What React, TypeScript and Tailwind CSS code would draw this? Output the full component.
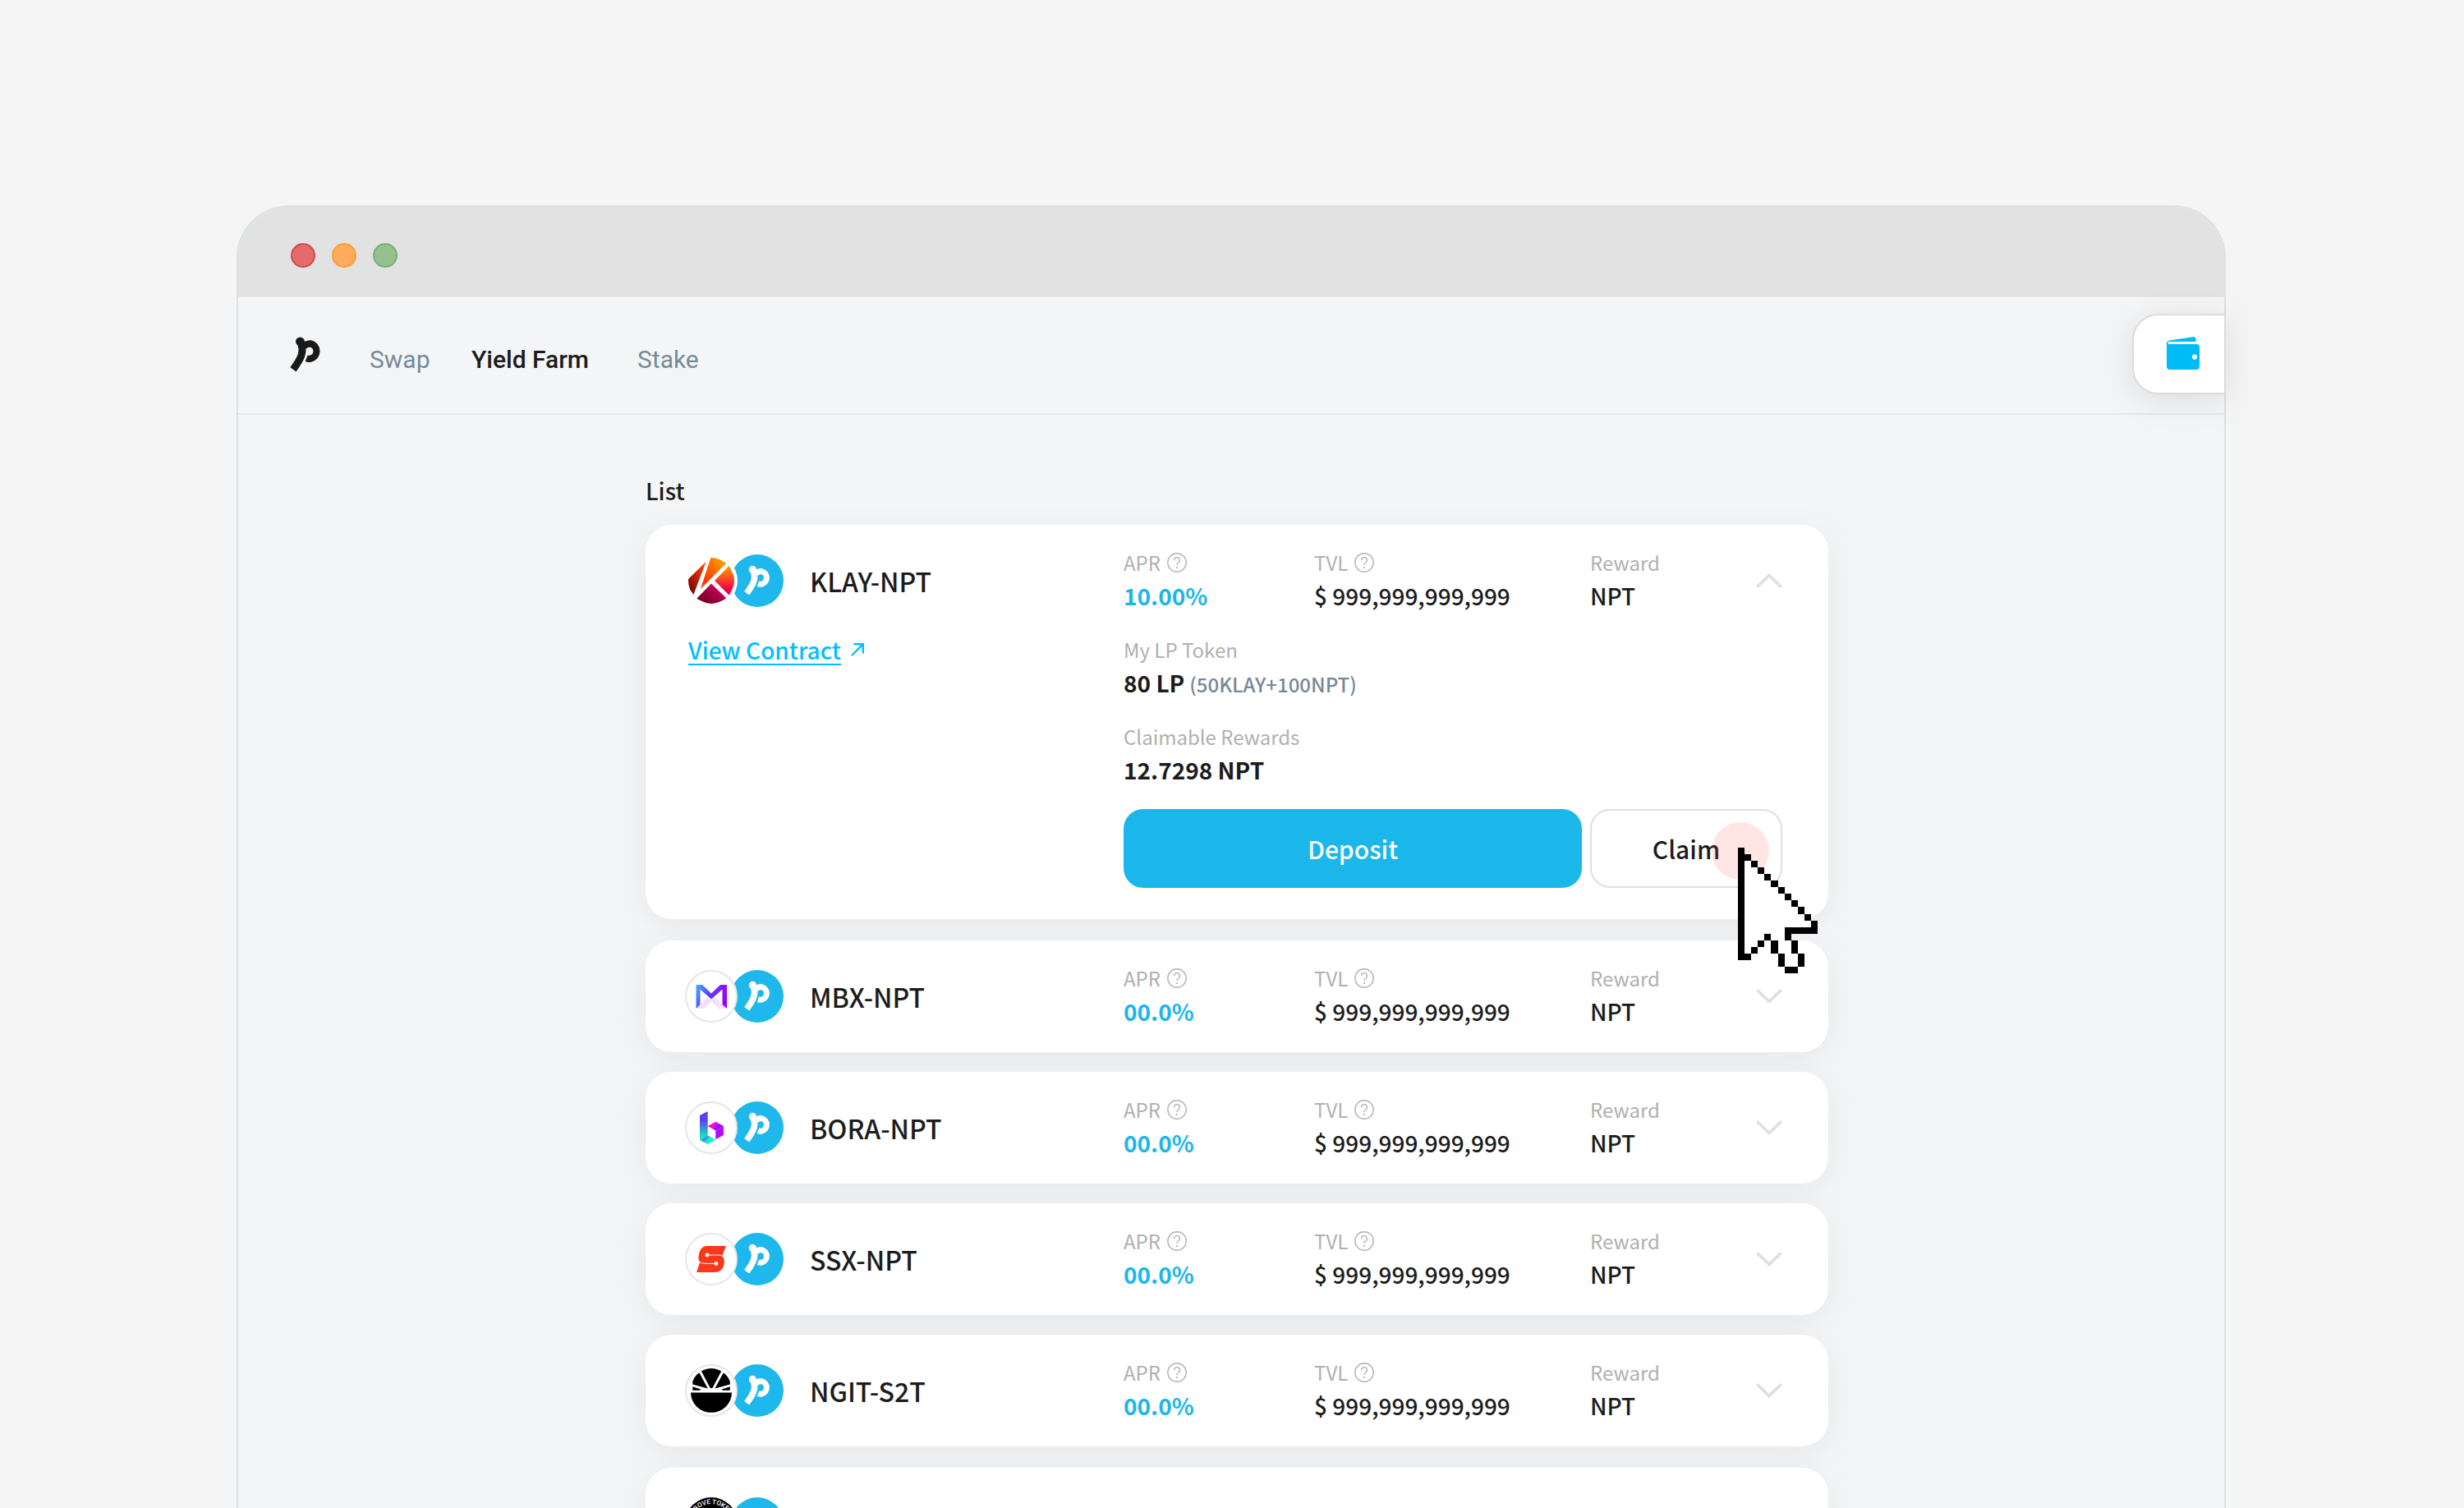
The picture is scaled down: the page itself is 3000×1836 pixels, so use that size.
import React from 'react';

interface Pool {
  name: string;
  apr: string;
  tvl: string;
  reward: string;
  icon: React.ReactNode;
  bordered?: boolean;
}

const GLYPH_STEM = 'M27 20C31 29 27.5 36 19.2 47.3';
const GLYPH_BOWL = 'M30 24Q32 20.6 37.2 20.6A8 8 0 0 1 37.2 36.2Q35 36.6 33 35.8';

const BrandGlyph: React.FC<{ color: string }> = ({ color }) => (
  <g stroke={color} fill="none">
    <path d={GLYPH_STEM} strokeWidth="7.6" />
    <path d={GLYPH_BOWL} strokeWidth="7" />
    <circle cx="26.4" cy="18.4" r="4.6" fill={color} stroke="none" />
  </g>
);

const BrandCoin = () => (
  <svg viewBox="0 0 64 64" className="-ml-2 size-16 shrink-0">
    <circle cx="32" cy="32" r="32" fill="#1fb8ec" />
    <BrandGlyph color="#fff" />
  </svg>
);

const KlayIcon = () => (
  <>
    <defs>
      <linearGradient id="klay-left" x1="1" y1="0" x2="0" y2="1">
        <stop offset="0.2" stopColor="#ff3300" />
        <stop offset="1" stopColor="#5a0008" />
      </linearGradient>
      <linearGradient id="klay-top" x1="1" y1="0" x2="0" y2="1">
        <stop offset="0.2" stopColor="#ff9500" />
        <stop offset="0.8" stopColor="#ff3300" />
      </linearGradient>
      <linearGradient id="klay-right" x1="0" y1="0" x2="0" y2="1">
        <stop offset="0.1" stopColor="#ff9000" />
        <stop offset="0.8" stopColor="#f0004c" />
      </linearGradient>
      <linearGradient id="klay-bottom" x1="1" y1="0" x2="0" y2="1">
        <stop offset="0.2" stopColor="#cc0066" />
        <stop offset="0.9" stopColor="#6e0010" />
      </linearGradient>
      <clipPath id="klay-clip">
        <circle cx="32" cy="32" r="28" />
      </clipPath>
    </defs>
    <circle cx="32" cy="32" r="32" fill="#fff" />
    <g clipPath="url(#klay-clip)">
      <path d="M25.5 9L4 30V40L10.5 49Z" fill="url(#klay-left)" />
      <path d="M32 2L19 42L51 10Z" fill="url(#klay-top)" />
      <path d="M54 13.5L36 32L54 50L62 32Z" fill="url(#klay-right)" />
      <path d="M32 35.5L14 54L32 62L51 54Z" fill="url(#klay-bottom)" />
    </g>
  </>
);

const MbxIcon = () => (
  <>
    <defs>
      <linearGradient id="mbx" x1="0" y1="0" x2="1" y2="0.4">
        <stop offset="0" stopColor="#43b4ff" />
        <stop offset="0.45" stopColor="#5b45ff" />
        <stop offset="1" stopColor="#9a00ff" />
      </linearGradient>
    </defs>
    <g stroke="#cf9bf5" strokeWidth="1" strokeDasharray="1.4 0.6">
      <path d="M28 34L15 46.5M29.5 35L17 46.8M30.5 36.2L19.5 46.8M31.5 37.2L22 46.8" />
      <path d="M36 34L49 46.5M34.5 35L47 46.8M33.5 36.2L44.5 46.8M32.5 37.2L42 46.8" />
    </g>
    <path d="M13.5 18H21L32 28.5L43 18H51V47L45.5 42V23.5L32 35.5L18.5 23.5V42L13.5 47Z" fill="url(#mbx)" />
  </>
);

const BoraIcon = () => (
  <>
    <defs>
      <linearGradient id="bora-stem" x1="0" y1="0" x2="0" y2="1">
        <stop offset="0.3" stopColor="#603cf2" />
        <stop offset="0.95" stopColor="#00ffb4" />
      </linearGradient>
      <linearGradient id="bora-base" x1="0" y1="0" x2="1" y2="0.5">
        <stop offset="0.5" stopColor="#4f8cff" />
        <stop offset="0.6" stopColor="#00ffb4" />
      </linearGradient>
      <linearGradient id="bora-top" x1="0" y1="0" x2="1" y2="0.6">
        <stop offset="0.5" stopColor="#ff00e1" />
        <stop offset="0.75" stopColor="#8a12ff" />
      </linearGradient>
      <linearGradient id="bora-side" x1="0" y1="1" x2="1" y2="0">
        <stop offset="0.2" stopColor="#a00cff" />
        <stop offset="1" stopColor="#d400ff" />
      </linearGradient>
    </defs>
    <path d="M18 17L27.7 12V42L18 47Z" fill="url(#bora-stem)" />
    <path d="M18 47L27.7 41.5L37 46.5L27.7 52Z" fill="url(#bora-base)" />
    <path d="M27.7 30L37.3 24.7L47 30L37.3 35.4Z" fill="url(#bora-top)" />
    <path d="M37.3 35.4L47 30V41L37.3 46.3Z" fill="url(#bora-side)" />
  </>
);

const SsxIcon = () => (
  <>
    <path
      d="M27 16H50L45.5 27.5C48 31 48.3 35 47.4 39C46 45 42 48 36 48H14L18 36C16 33 16 28 17.5 24C19 19 22 16 27 16Z"
      fill="#f9381c"
    />
    <g stroke="#fff" strokeWidth="1" fill="none">
      <path d="M27 27H41Q45 27 46.5 29.5M38 37.4H24Q19 37.4 17 34.5" />
    </g>
    <circle cx="27" cy="27" r="2.4" fill="#fff" />
    <circle cx="38" cy="37.4" r="2.4" fill="#fff" />
  </>
);

const NgitIcon = () => (
  <>
    <defs>
      <clipPath id="ngit-clip">
        <circle cx="32" cy="29.5" r="24.4" />
      </clipPath>
    </defs>
    <path d="M7 34.4H57A25 24.4 0 0 1 7 34.4Z" fill="#000" />
    <g clipPath="url(#ngit-clip)" fill="#000">
      <path d="M17.6 4H46.6L33.4 29H30.8Z" />
      <path d="M15.6 7L27.8 29.6L9.3 24.6V7Z" />
      <path d="M48.6 7L36.4 29.6L54.8 24.6V7Z" />
      <path d="M9.3 27.2L19.4 30.4L18 31.8H9.3Z" />
      <path d="M54.8 27.2L44.7 30.4L46 31.8H54.8Z" />
    </g>
  </>
);

const RoundTextIcon = () => (
  <>
    <defs>
      <path id="coin-arc" d="M8 32A24 24 0 0 1 56 32" />
    </defs>
    <circle cx="32" cy="32" r="32" fill="#000" />
    <text fill="#fff" fontSize="8" fontWeight="500" className="font-['Roboto',sans-serif]">
      <textPath href="#coin-arc" startOffset="50%" textAnchor="middle">
        ABOVE TOKEN
      </textPath>
    </text>
  </>
);

const QuestionIcon = () => (
  <svg viewBox="0 0 24 24" className="size-6" fill="none" stroke="#b4b4b4" strokeWidth="1.4">
    <circle cx="12" cy="12" r="11.2" />
    <path d="M8.6 9.2A3.4 3.4 0 1 1 13.6 12Q12 13 12 15" />
    <path d="M12 17V19" strokeWidth="1.8" />
  </svg>
);

const WalletIcon = () => (
  <svg viewBox="0 0 40 40" className="size-10" fill="#00bcf6">
    <path d="M0 8.6Q0 5 3 4.6L31.6 0.3Q35.6 -0.3 35.6 3V6H2.5Q1.5 6 1.8 8Q2.2 9 4 9H36Q40 9 40 13V36Q40 40 36 40H4Q0 40 0 36Z" />
    <path d="M1.8 7.6L35.6 6.2V9H2.6Z" fill="#fff" />
    <circle cx="34" cy="24.6" r="3.1" fill="#fff" />
  </svg>
);

// One entry per run of pixels: [x, y, width, height]
const CURSOR_OUTLINE = [
  [0, 0, 1, 17], [1, 1, 1, 1], [2, 2, 1, 1], [3, 3, 1, 1], [4, 4, 1, 1], [5, 5, 1, 1], [6, 6, 1, 1],
  [7, 7, 1, 1], [8, 8, 1, 1], [9, 9, 1, 1], [10, 10, 1, 1], [11, 11, 1, 2], [7, 12, 4, 1], [7, 13, 1, 1],
  [4, 13, 1, 1], [3, 14, 1, 1], [5, 14, 1, 2], [2, 15, 1, 1], [8, 14, 1, 2], [1, 16, 1, 1], [6, 16, 1, 2],
  [9, 16, 1, 2], [7, 18, 2, 1],
];

const PixelCursor = () => (
  <svg
    viewBox="0 0 12 19"
    shapeRendering="crispEdges"
    className="pointer-events-none absolute left-[180px] top-[47px] h-[153px] w-[97px]"
  >
    <path d="M0 0H1V1H2V2H3V3H4V4H5V5H6V6H7V7H8V8H9V9H10V10H11V11H12V13H8V14H9V16H10V18H9V19H7V18H6V16H5V14H4V15H3V16H2V17H0Z" fill="#fff" />
    {CURSOR_OUTLINE.map(([x, y, w, h]) => (
      <rect key={`${x}-${y}`} x={x} y={y} width={w} height={h} fill="#000" />
    ))}
  </svg>
);

const TokenPair: React.FC<{ pool: Pool }> = ({ pool }) => (
  <div className="flex items-center">
    <svg viewBox="0 0 64 64" className="relative z-10 size-16 shrink-0">
      {pool.bordered && <circle cx="32" cy="32" r="31" fill="#fff" stroke="#e6e6e6" strokeWidth="2" />}
      {pool.icon}
    </svg>
    <BrandCoin />
    <h3 className="ml-8 text-[32px] font-medium leading-[44px]">{pool.name}</h3>
  </div>
);

interface StatProps {
  label: string;
  help?: boolean;
  children: React.ReactNode;
}

const Stat: React.FC<StatProps> = ({ label, help, children }) => (
  <div>
    <div className="flex h-9 items-center gap-2 text-2xl font-normal leading-9 text-[#b0b0b0]">
      {label}
      {help && <QuestionIcon />}
    </div>
    <div className="text-[28px] font-medium leading-[44px]">{children}</div>
  </div>
);

const PoolCard: React.FC<{ pool: Pool; open?: boolean }> = ({ pool, open }) => (
  <article className="rounded-[32px] bg-white pl-12 pr-14 pt-7 shadow-[0_8px_40px_rgba(0,0,0,0.06)]">
    <div className="grid grid-cols-[534px_232px_336px_1fr] items-center pb-7">
      <TokenPair pool={pool} />
      <Stat label="APR" help>
        <span className="font-bold text-[#1bb7ea]">{pool.apr}</span>
      </Stat>
      <Stat label="TVL" help>{pool.tvl}</Stat>
      <div className="flex items-center justify-between">
        <Stat label="Reward">{pool.reward}</Stat>
        <button type="button" aria-label={open ? 'Collapse' : 'Expand'}>
          <svg viewBox="0 0 32 18" className="h-[18px] w-8" fill="none" stroke="#dde0e4" strokeWidth="3.6">
            <path d={open ? 'M1.3 16.6L16 2.6L30.7 16.6' : 'M1.3 1.4L16 15.4L30.7 1.4'} />
          </svg>
        </button>
      </div>
    </div>

    {open && (
      <div className="-mt-0.5 grid grid-cols-[534px_1fr] pb-[38px]">
        <div className="pl-1">
          <a href="#contract" className="inline-flex items-center gap-3 text-[28px] font-medium leading-9 text-[#00bfff]">
            <span className="underline decoration-2 underline-offset-[5px]">View Contract</span>
            <svg viewBox="0 0 16 16" className="size-4" fill="none" stroke="#00bfff" strokeWidth="2.4">
              <path d="M1 15L14.4 1.6M3.4 1.2H14.8V12.6" />
            </svg>
          </a>
        </div>
        <div className="flex flex-col gap-[26px]">
          <Stat label="My LP Token">
            <span className="font-bold">80 LP</span>
            <span className="ml-1.5 text-2xl font-medium leading-9 text-[#778899]">(50KLAY+100NPT)</span>
          </Stat>
          <Stat label="Claimable Rewards">
            <span className="font-bold">12.7298 NPT</span>
          </Stat>
          <div className="flex gap-2.5">
            <button type="button" className="h-24 flex-1 rounded-3xl bg-[#1bb7ea] text-[30px] font-medium text-white">
              Deposit
            </button>
            <div className="relative z-20">
              <button type="button" className="h-24 w-[234px] rounded-3xl border-2 border-[#dde0e4] bg-white text-[30px] font-medium">
                Claim
              </button>
              {/* Tap highlight under the pointer */}
              <span className="pointer-events-none absolute left-[148px] top-4 size-[70px] rounded-full bg-[#ff3b30]/13" />
              <PixelCursor />
            </div>
          </div>
        </div>
      </div>
    )}
  </article>
);

// Row that is still loading: only the coins are known
const PendingCard: React.FC<{ icon: React.ReactNode }> = ({ icon }) => (
  <article className="flex h-[136px] items-center rounded-[32px] bg-white pl-12 shadow-[0_8px_40px_rgba(0,0,0,0.06)]">
    <svg viewBox="0 0 64 64" className="relative z-10 size-16 shrink-0">
      {icon}
    </svg>
    <BrandCoin />
  </article>
);

const TVL = '$ 999,999,999,999';

const openPool: Pool = { name: 'KLAY-NPT', apr: '10.00%', tvl: TVL, reward: 'NPT', icon: <KlayIcon /> };

const pools: Pool[] = [
  { name: 'MBX-NPT', apr: '00.0%', tvl: TVL, reward: 'NPT', icon: <MbxIcon />, bordered: true },
  { name: 'BORA-NPT', apr: '00.0%', tvl: TVL, reward: 'NPT', icon: <BoraIcon />, bordered: true },
  { name: 'SSX-NPT', apr: '00.0%', tvl: TVL, reward: 'NPT', icon: <SsxIcon />, bordered: true },
  { name: 'NGIT-S2T', apr: '00.0%', tvl: TVL, reward: 'NPT', icon: <NgitIcon />, bordered: true },
];

const Navbar = () => (
  <nav className="flex h-[143px] items-start justify-between border-b-2 border-[#e5e8eb] pl-[62px] pt-5 font-['Roboto',sans-serif]">
    <div className="flex h-[98px] items-center gap-14">
      <svg viewBox="15 13.5 34 36.5" className="h-[43px] w-10">
        <BrandGlyph color="#1a1a1a" />
      </svg>
      <div className="grid grid-cols-[124px_202px_auto] pl-0.5 pt-3.5 text-[30px] leading-10 text-[#778a96]">
        <a href="#swap">Swap</a>
        <a href="#farm" className="font-medium text-[#1c1c1c]">Yield Farm</a>
        <a href="#stake">Stake</a>
      </div>
    </div>
    <button
      type="button"
      aria-label="Wallet"
      className="relative -mr-0.5 flex h-[98px] w-[114px] items-center rounded-l-[32px] border-2 border-[#dcdcdc] bg-white pb-0.5 pl-10 shadow-[0_8px_40px_rgba(0,0,0,0.1)]"
    >
      <WalletIcon />
    </button>
  </nav>
);

export default function App() {
  return (
    <div className="h-screen overflow-hidden bg-[#f5f5f5] pl-72 pr-[290px] pt-[250px] font-['Noto_Sans_CJK_KR','Noto_Sans',sans-serif] text-[#1c1c1c]">
      <div className="min-h-[1700px] rounded-t-[64px] border-2 border-[#d9e1e5] bg-[#f3f5f7]">
        <div className="flex h-[110px] items-center gap-5 rounded-t-[62px] border-b border-[#e9e9e9] bg-[#e2e2e2] pl-16 pt-2">
          <span className="size-[30px] rounded-full border-2 border-[#d14a4d] bg-[#e46a6d]" />
          <span className="size-[30px] rounded-full border-2 border-[#fb9d32] bg-[#ffab5e]" />
          <span className="size-[30px] rounded-full border-2 border-[#74ae7c] bg-[#96c08e]" />
        </div>
        <Navbar />

        <main className="pl-3.5">
          <div className="mx-auto max-w-[1440px] pt-[70px]">
            <h2 className="mb-5 text-[28px] font-medium leading-[44px]">List</h2>
            <div className="flex flex-col gap-[26px]">
              <PoolCard pool={openPool} open />
              <div className="flex flex-col gap-6">
                {pools.map((pool) => (
                  <PoolCard key={pool.name} pool={pool} />
                ))}
              </div>
              <PendingCard icon={<RoundTextIcon />} />
            </div>
          </div>
        </main>
      </div>
    </div>
  );
}
